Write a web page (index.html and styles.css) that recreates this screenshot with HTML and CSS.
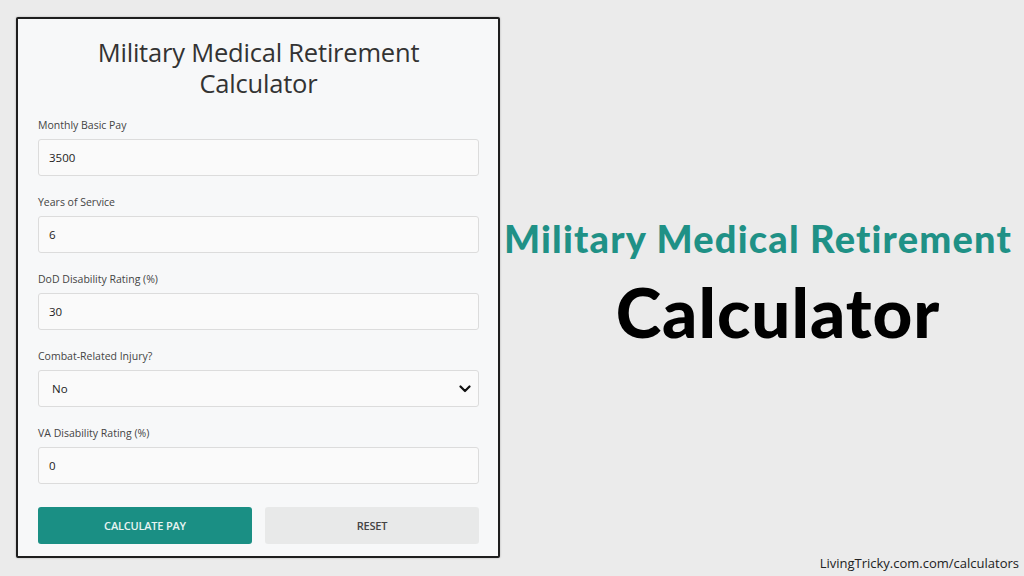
FILE: index.html
```html
<!DOCTYPE html>
<html>
<head>
<meta charset="utf-8">
<link rel="stylesheet" href="styles.css">
</head>
<body>
<div class="page">
  <div class="card">
    <h1 class="card-title">Military Medical Retirement<br>Calculator</h1>
    <div class="field">
      <label class="label">Monthly Basic Pay</label>
      <div class="input">3500</div>
    </div>
    <div class="field">
      <label class="label">Years of Service</label>
      <div class="input">6</div>
    </div>
    <div class="field">
      <label class="label">DoD Disability Rating (%)</label>
      <div class="input">30</div>
    </div>
    <div class="field">
      <label class="label">Combat-Related Injury?</label>
      <div class="input select">
        <span>No</span>
        <svg class="chev" width="12" height="8" viewBox="0 0 12 8"><path d="M1.5 1.5 L6 6 L10.5 1.5" fill="none" stroke="#111" stroke-width="2.2" stroke-linecap="round" stroke-linejoin="round"/></svg>
      </div>
    </div>
    <div class="field">
      <label class="label">VA Disability Rating (%)</label>
      <div class="input">0</div>
    </div>
    <div class="buttons">
      <div class="btn btn-primary">CALCULATE PAY</div>
      <div class="btn btn-secondary">RESET</div>
    </div>
  </div>
  <div class="side">
    <div class="side-title">Military Medical Retirement</div>
    <div class="side-sub">Calculator</div>
    <div class="footer">LivingTricky.com.com/calculators</div>
  </div>
</div>
</body>
</html>
```
FILE: styles.css
```css
* { box-sizing: border-box; }
html, body { margin: 0; padding: 0; }
body {
  background: #ebebeb;
  font-family: "Open Sans", "Noto Sans", sans-serif;
  width: 1024px;
  height: 576px;
  overflow: hidden;
}
.page {
  display: flex;
  height: 576px;
  padding: 17px 0 0 16px;
}
.card {
  width: 484px;
  height: 541px;
  background: #f7f8f9;
  border: 2px solid #1e1e1e;
  border-radius: 2px;
  padding: 18px 19px 0 20px;
  box-shadow: 0 0 2px rgba(0,0,0,0.3);
}
.card-title {
  margin: 0 0 19px;
  text-align: center;
  font-size: 25.5px;
  font-weight: 500;
  line-height: 31px;
  color: #333;
  letter-spacing: -0.2px;
}
.field {
  display: flex;
  flex-direction: column;
  margin-bottom: 19px;
}
.label {
  font-size: 10.5px;
  color: #444;
  line-height: 14px;
  margin-bottom: 7px;
}
.input {
  height: 37px;
  border: 1px solid #dcdcdc;
  border-radius: 3px;
  background: #fafafa;
  font-size: 11.5px;
  color: #222;
  padding: 0 10px;
  display: flex;
  align-items: center;
}
.select {
  justify-content: space-between;
  padding-left: 13px;
  padding-right: 7px;
}
.chev { display: block; }
.buttons {
  display: grid;
  grid-template-columns: 1fr 1fr;
  gap: 13px;
  margin-top: 23px;
}
.btn {
  height: 37px;
  border-radius: 3px;
  display: flex;
  align-items: center;
  justify-content: center;
  font-size: 11px;
  font-weight: 600;
  letter-spacing: -0.2px;
}
.btn-primary { background: #1a8f84; color: #e8f4f2; }
.btn-secondary { background: #e8e9e9; color: #444; }
.side {
  flex: 1;
  position: relative;
  display: flex;
  flex-direction: column;
  align-items: center;
  padding-top: 198px;
}
.side-title {
  font-family: "Lato", sans-serif;
  font-weight: 900;
  font-size: 38px;
  letter-spacing: 1.2px;
  color: #1f9186;
  line-height: 46px;
  white-space: nowrap;
  margin-left: -8px;
}
.side-sub {
  font-family: "Lato", sans-serif;
  font-weight: 900;
  font-size: 69px;
  letter-spacing: 1px;
  color: #000;
  line-height: 80px;
  margin-top: 11px;
  margin-left: 32px;
}
.footer {
  position: absolute;
  right: 5px;
  bottom: 4px;
  font-size: 13px;
  color: #222;
}
```
